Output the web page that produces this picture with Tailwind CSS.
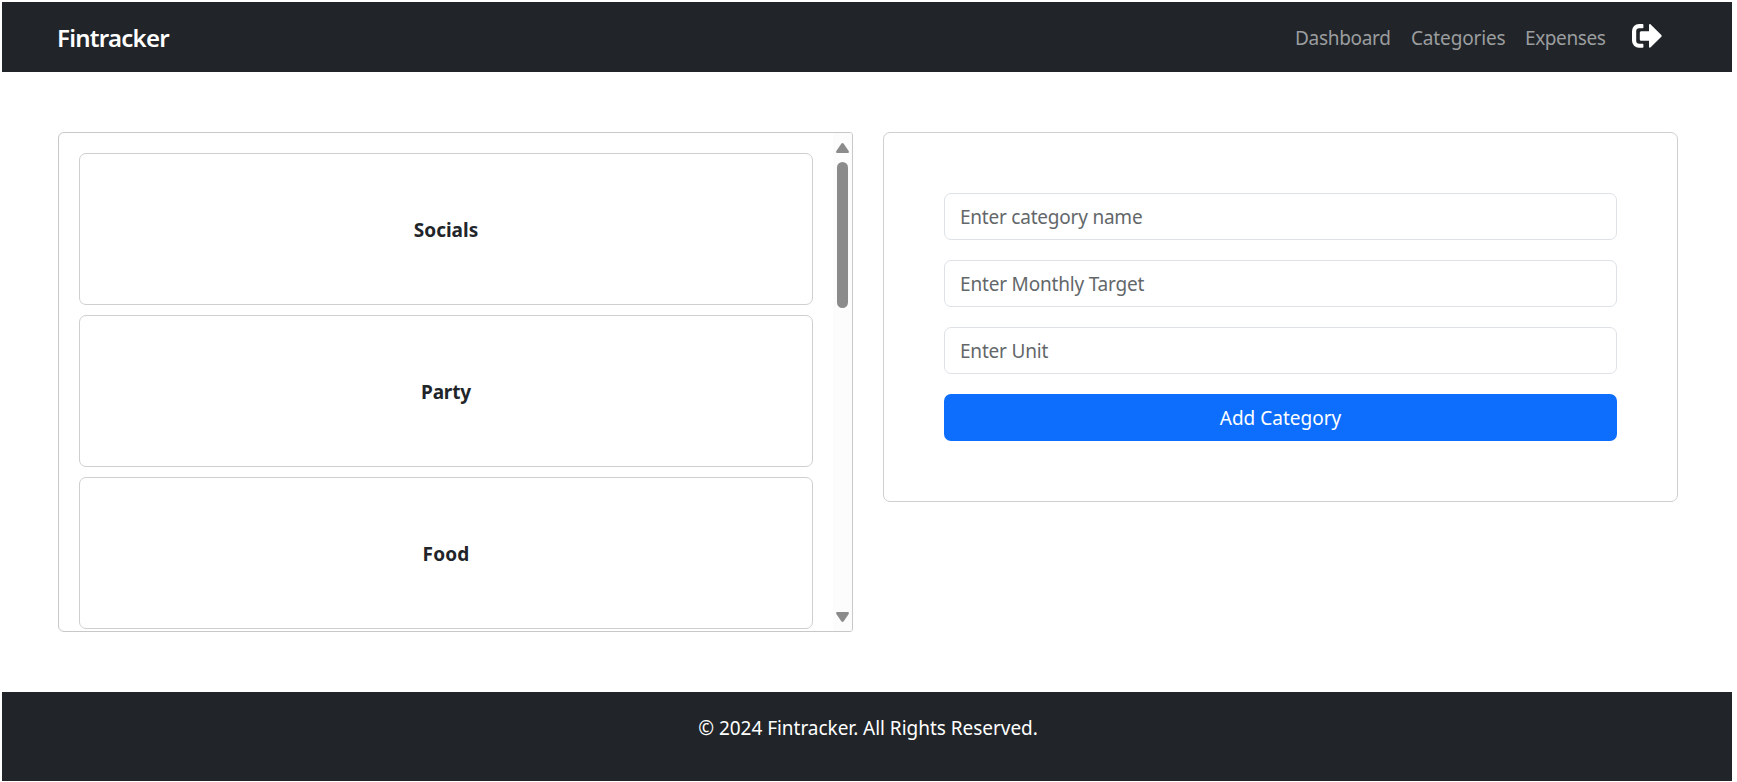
<!DOCTYPE html>
<html lang="en">
<head>
<meta charset="utf-8">
<title>Fintracker</title>
<script src="https://cdn.jsdelivr.net/npm/@tailwindcss/browser@4"></script>
</head>
<body class="bg-white font-['Noto_Sans','Open_Sans',sans-serif] text-[19px] leading-[30px] text-[#212529]">
<div class="ml-0.5 mt-0.5 flex h-[779px] w-[1730px] flex-col">
  <header class="flex h-[70px] shrink-0 items-center justify-between bg-[#212529] pl-[55px] pr-[70px]">
    <a class="pt-px text-2xl font-semibold tracking-[-0.75px] text-white">Fintracker</a>
    <nav class="flex items-center text-[#9b9d9f]">
      <a class="w-[116px] pt-0.5 tracking-[-0.3px]">Dashboard</a>
      <a class="w-[114px] pt-0.5 tracking-[-0.15px]">Categories</a>
      <a class="w-[107px] pt-0.5 tracking-[-0.4px]">Expenses</a>
      <svg class="mb-0.5 h-6 w-[30px] fill-white" viewBox="0 0 30 24" aria-label="Log out">
        <path d="M7 0h3.600a.8.8 0 0 1 .8.8v2.600a.8.8 0 0 1-.8.8H7.200A3 3 0 0 0 4.200 7.200v9.600A3 3 0 0 0 7.200 19.800h3.400a.8.8 0 0 1 .8.8v2.400a.8.8 0 0 1-.8.8H7A7 7 0 0 1 0 16.800V7A7 7 0 0 1 7 0Z"/>
        <path d="M17 1.100c0-1 1-1.300 1.700-.6l10.600 10.500c.5.500.5 1.300 0 1.800L18.700 23.300c-.7.7-1.700.4-1.700-.6v-5.900H9.400c-.9 0-1.600-.7-1.600-1.600V8.800c0-.9.7-1.600 1.600-1.600H17Z"/>
      </svg>
    </nav>
  </header>

  <main class="flex grow items-start gap-[30px] pl-14 pt-[60px]">
    <section class="flex h-[500px] w-[795px] overflow-hidden rounded-l-md rounded-r-[3px] border border-[#c8c8c8]">
      <div class="flex grow flex-col gap-2.5 overflow-hidden px-5 pt-5 font-bold">
        <div class="flex h-[152px] shrink-0 items-center justify-center rounded-[7px] border border-[#cfcfcf] pt-px">Socials</div>
        <div class="flex h-[152px] shrink-0 items-center justify-center rounded-[7px] border border-[#cfcfcf] pt-px tracking-[-0.15px]">Party</div>
        <div class="flex h-[152px] shrink-0 items-center justify-center rounded-[7px] border border-[#cfcfcf] pt-px tracking-[0.2px]">Food</div>
      </div>
      <div class="flex w-[19px] shrink-0 flex-col items-center bg-[#fcfcfc] pt-2.5 pb-[9px]">
        <svg class="h-2.5 w-[13px] shrink-0 fill-[#8b8b8b]" viewBox="0 0 13 10"><path d="M5.300.7Q6.500-.6 7.700.7L12.700 8Q13.300 9.700 12 10H1Q-.3 9.700.3 8Z"/></svg>
        <div class="mt-[9px] h-[146px] w-[11px] shrink-0 rounded-full bg-[#8b8b8b]"></div>
        <svg class="mt-auto h-2.5 w-[13px] shrink-0 fill-[#8b8b8b]" viewBox="0 0 13 10"><path d="M5.300 9.300Q6.500 10.600 7.700 9.300L12.700 2Q13.300.3 12 0H1Q-.3.3.3 2Z"/></svg>
      </div>
    </section>

    <form class="flex w-[795px] flex-col gap-5 rounded-[7px] border border-[#cfcfcf] p-[60px]">
      <input class="h-[47px] rounded-[7px] border border-[#dee2e6] px-[15px] pt-px tracking-[-0.22px] placeholder:text-[#63676a]" placeholder="Enter category name">
      <input class="h-[47px] rounded-[7px] border border-[#dee2e6] px-[15px] pt-px tracking-[-0.18px] placeholder:text-[#63676a]" placeholder="Enter Monthly Target">
      <input class="h-[47px] rounded-[7px] border border-[#dee2e6] px-[15px] pt-px tracking-[-0.2px] placeholder:text-[#63676a]" placeholder="Enter Unit">
      <button type="button" class="h-[47px] rounded-[7px] bg-[#0d6efd] pt-px text-white">Add Category</button>
    </form>
  </main>

  <footer class="h-[89px] shrink-0 bg-[#212529] pt-[21px] pl-0.5 text-center tracking-[-0.03px] text-white">© 2024 Fintracker. All Rights Reserved.</footer>
</div>
</body>
</html>
